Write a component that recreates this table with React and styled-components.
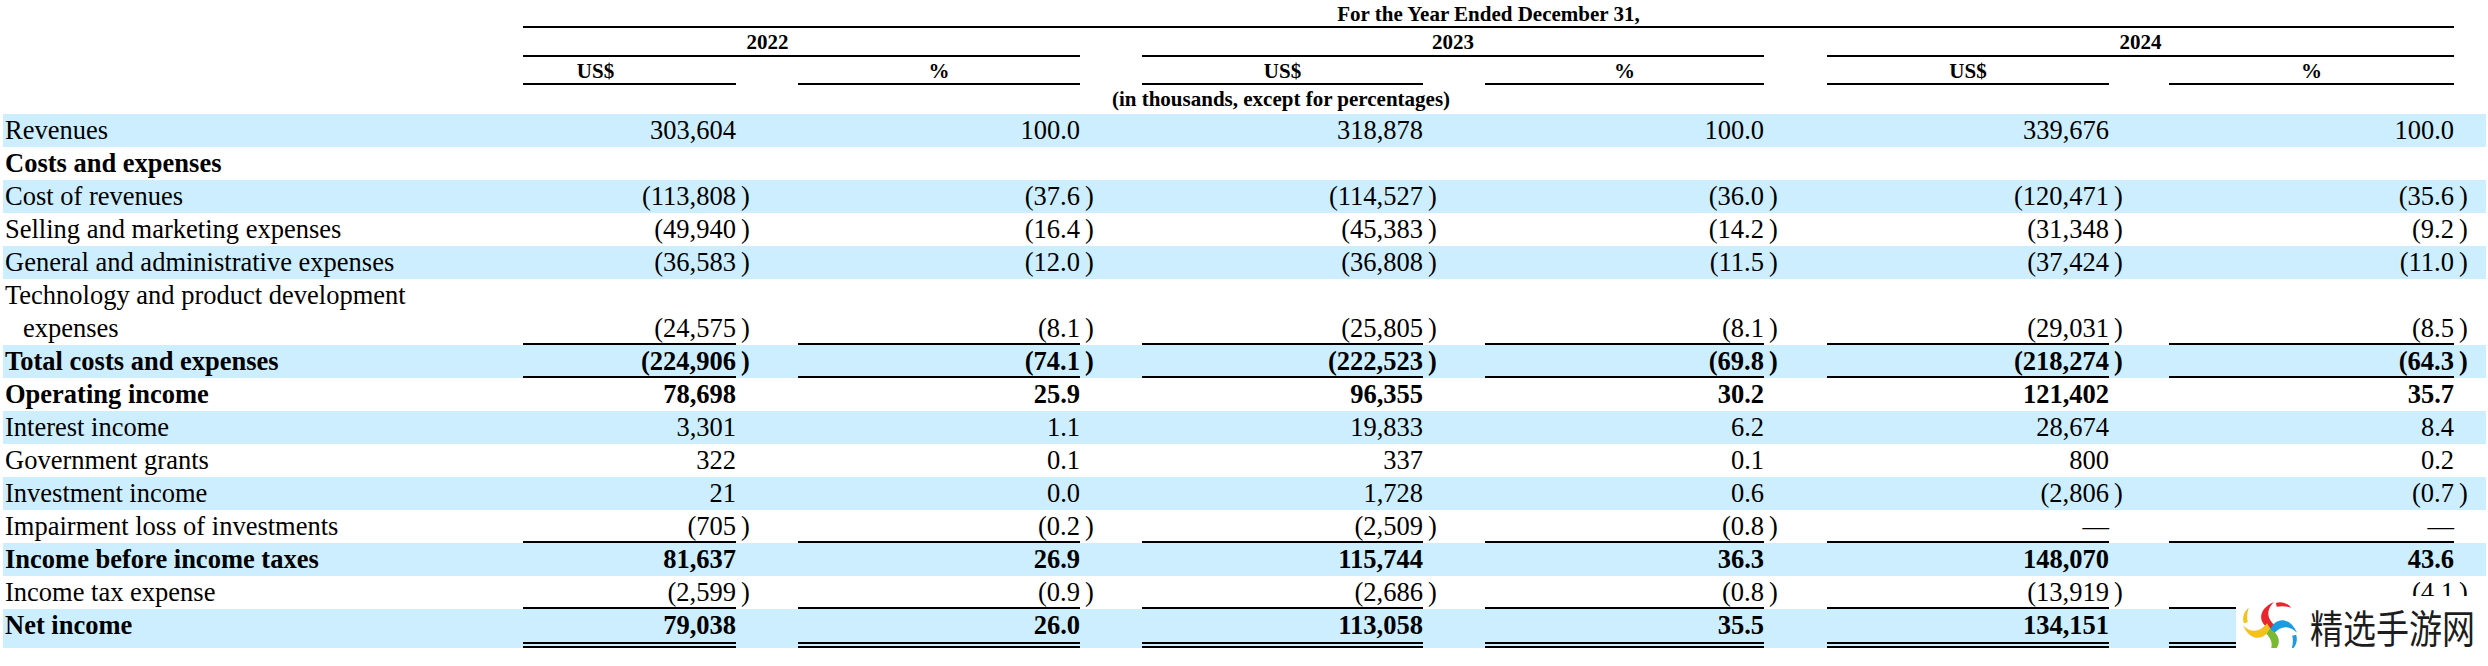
import React from 'react'
import styled, { createGlobalStyle } from 'styled-components'

const GlobalStyle = createGlobalStyle`
  body {
    margin: 0;
    background: #fff;
    color: #000;
    font-family: "Liberation Serif", "Times New Roman", serif;
  }
`

// label | 2022 US$ | gap | 2022 % | gap | 2023 US$ | gap | 2023 % | gap | 2024 US$ | gap | 2024 % | tail
const COLS =
  '520px 213px 62px 282px 62px 281px 62px 279px 63px 282px 60px 285px 32px'

const Page = styled.div`
  position: relative;
  width: 2483px;
  padding-left: 3px;
`

const HeadRow = styled.div`
  display: grid;
  grid-template-columns: ${COLS};
  height: ${(p) => p.$h}px;
  line-height: ${(p) => p.$h}px;
  font-size: 21px;
  font-weight: 700;
`

const HeadCell = styled.div`
  grid-column: ${(p) => p.$col};
  display: flex;
  justify-content: center;
  white-space: nowrap;
  padding-right: ${(p) => p.$shift || 0}px;
  box-shadow: ${(p) => (p.$rule ? 'inset 0 -2px 0 #000' : 'none')};
`

const Row = styled.div`
  display: grid;
  grid-template-columns: ${COLS};
  background: ${(p) => (p.$shade ? '#cceeff' : 'transparent')};
  font-size: 26.5px;
  line-height: 33px;
  font-weight: ${(p) => (p.$bold ? 700 : 400)};
`

const Label = styled.div`
  padding: 0 80px 0 20px;
  text-indent: -18px;
`

const Num = styled.div`
  display: flex;
  justify-content: flex-end;
  align-items: flex-end;
  white-space: nowrap;
  box-shadow: ${(p) => (p.$rule === 'single' ? 'inset 0 -2px 0 #000' : 'none')};
  border-bottom: ${(p) => (p.$rule === 'double' ? '6px double #000' : 'none')};
`

const Paren = styled.div`
  display: flex;
  align-items: flex-end;
  padding-left: 5px;
`

const Watermark = styled.div`
  position: absolute;
  top: 596px;
  left: 2236px;
  width: 252px;
  height: 70px;
  background: #fff;
  display: flex;
  align-items: flex-start;
  gap: 11px;
  padding: 3px 0 0 5px;
  box-sizing: border-box;
`

const Brand = styled.div`
  display: flex;
  flex-direction: column;
  padding-top: 6px;
`

const BrandName = styled.div`
  font-family: "Noto Sans CJK SC", "Noto Sans", sans-serif;
  font-size: 33px;
  line-height: 36px;
  height: 42px;
  color: #1d1d1d;
  white-space: nowrap;
  transform: scaleY(1.18);
  transform-origin: top left;
`

const BrandUrl = styled.div`
  display: flex;
  align-items: center;
  gap: 3px;
  font-family: "Liberation Sans", Arial, sans-serif;
  font-size: 12.5px;
  line-height: 14px;
  color: #222;
  &::before,
  &::after {
    content: '';
    flex: 1;
    height: 2px;
    background: #333;
  }
`

const rows = [
  { label: 'Revenues', vals: ['303,604', '100.0', '318,878', '100.0', '339,676', '100.0'] },
  { label: 'Costs and expenses', bold: true },
  { label: 'Cost of revenues', vals: ['(113,808', '(37.6', '(114,527', '(36.0', '(120,471', '(35.6'] },
  { label: 'Selling and marketing expenses', vals: ['(49,940', '(16.4', '(45,383', '(14.2', '(31,348', '(9.2'] },
  { label: 'General and administrative expenses', vals: ['(36,583', '(12.0', '(36,808', '(11.5', '(37,424', '(11.0'] },
  {
    label: 'Technology and product development expenses',
    vals: ['(24,575', '(8.1', '(25,805', '(8.1', '(29,031', '(8.5'],
    rule: 'single',
  },
  {
    label: 'Total costs and expenses',
    bold: true,
    vals: ['(224,906', '(74.1', '(222,523', '(69.8', '(218,274', '(64.3'],
    rule: 'single',
  },
  { label: 'Operating income', bold: true, vals: ['78,698', '25.9', '96,355', '30.2', '121,402', '35.7'] },
  { label: 'Interest income', vals: ['3,301', '1.1', '19,833', '6.2', '28,674', '8.4'] },
  { label: 'Government grants', vals: ['322', '0.1', '337', '0.1', '800', '0.2'] },
  { label: 'Investment income', vals: ['21', '0.0', '1,728', '0.6', '(2,806', '(0.7'] },
  {
    label: 'Impairment loss of investments',
    vals: ['(705', '(0.2', '(2,509', '(0.8', '—', '—'],
    rule: 'single',
  },
  { label: 'Income before income taxes', bold: true, vals: ['81,637', '26.9', '115,744', '36.3', '148,070', '43.6'] },
  {
    label: 'Income tax expense',
    vals: ['(2,599', '(0.9', '(2,686', '(0.8', '(13,919', '(4.1'],
    rule: 'single',
  },
  {
    // last % cell sits under the watermark in the source
    label: 'Net income',
    bold: true,
    vals: ['79,038', '26.0', '113,058', '35.5', '134,151', ''],
    rule: 'double',
  },
]

const BLADES = [
  ['#e8262b', 0],
  ['#1b9be0', 90],
  ['#79b933', 180],
  ['#f4c21b', 270],
]

const Logo = () => (
  <svg width="58" height="60" viewBox="0 0 60 60">
    {BLADES.map(([color, deg]) => (
      <g key={deg} transform={`rotate(${deg} 30 30)`}>
        <path d="M31 30 C 18 25, 16 10, 34 2 C 26 10, 26 19, 36 27 Z" fill={color} />
        <path d="M36 3 C 42 1, 48 3, 52 8 C 46 6, 41 6, 37 7 Z" fill={color} />
      </g>
    ))}
  </svg>
)

const DataRow = ({ row, shade }) => {
  const cells = [<Label key="l">{row.label}</Label>]
  for (let i = 0; i < 6; i++) {
    const v = row.vals ? row.vals[i] : ''
    cells.push(
      <Num key={`v${i}`} $rule={row.rule}>
        {v}
      </Num>
    )
    cells.push(<Paren key={`p${i}`}>{v.startsWith('(') ? ')' : ''}</Paren>)
  }
  return (
    <Row $shade={shade} $bold={row.bold}>
      {cells}
    </Row>
  )
}

export default function App() {
  return (
    <Page>
      <GlobalStyle />
      <HeadRow $h={28}>
        <HeadCell $col="2 / 13" $rule>
          For the Year Ended December 31,
        </HeadCell>
      </HeadRow>
      <HeadRow $h={29}>
        <HeadCell $col="2 / 5" $rule $shift={68}>
          2022
        </HeadCell>
        <HeadCell $col="6 / 9" $rule>
          2023
        </HeadCell>
        <HeadCell $col="10 / 13" $rule>
          2024
        </HeadCell>
      </HeadRow>
      <HeadRow $h={28}>
        <HeadCell $col="2" $rule $shift={68}>
          US$
        </HeadCell>
        <HeadCell $col="4" $rule>
          %
        </HeadCell>
        <HeadCell $col="6" $rule>
          US$
        </HeadCell>
        <HeadCell $col="8" $rule>
          %
        </HeadCell>
        <HeadCell $col="10" $rule>
          US$
        </HeadCell>
        <HeadCell $col="12" $rule>
          %
        </HeadCell>
      </HeadRow>
      <HeadRow $h={29}>
        <HeadCell $col="4 / 9">(in thousands, except for percentages)</HeadCell>
      </HeadRow>
      {rows.map((row, i) => (
        <DataRow key={row.label} row={row} shade={i % 2 === 0} />
      ))}
      <Watermark>
        <Logo />
        <Brand>
          <BrandName>精选手游网</BrandName>
          <BrandUrl>www.tzymjx.net</BrandUrl>
        </Brand>
      </Watermark>
    </Page>
  )
}
